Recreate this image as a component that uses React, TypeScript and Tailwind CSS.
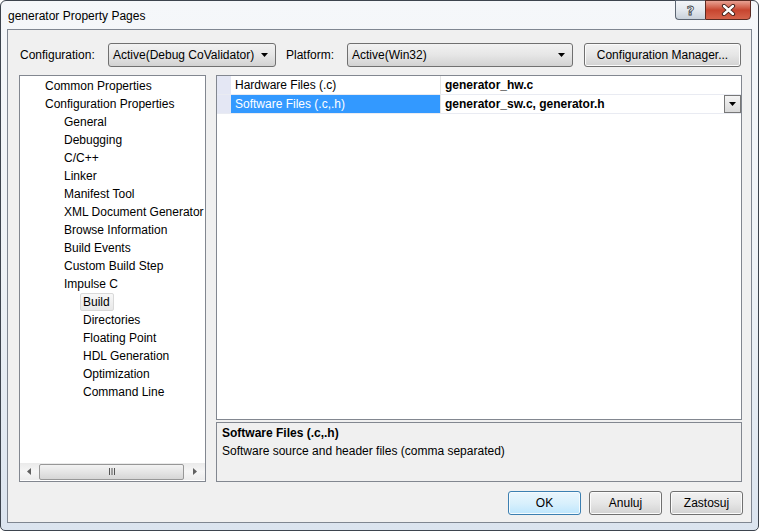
import React from "react";

const tree: [string, number, boolean?][] = [
  ["Common Properties", 1],
  ["Configuration Properties", 1],
  ["General", 2],
  ["Debugging", 2],
  ["C/C++", 2],
  ["Linker", 2],
  ["Manifest Tool", 2],
  ["XML Document Generator", 2],
  ["Browse Information", 2],
  ["Build Events", 2],
  ["Custom Build Step", 2],
  ["Impulse C", 2],
  ["Build", 3, true],
  ["Directories", 3],
  ["Floating Point", 3],
  ["HDL Generation", 3],
  ["Optimization", 3],
  ["Command Line", 3],
];

function DownArrow({ className = "" }: { className?: string }) {
  return (
    <svg width="7" height="4" viewBox="0 0 7 4" className={className}>
      <path d="M0 0 H7 L3.5 4 Z" fill="#000" />
    </svg>
  );
}

function Combo({ text, w }: { text: string; w: string }) {
  return (
    <div
      className={`${w} h-[24px] flex items-center justify-between rounded-[3px] border border-[#707070] bg-gradient-to-b from-[#f2f2f2] via-[#e6e6e6] to-[#d2d2d2] pl-[4px] pr-[7px]`}
    >
      <span className="whitespace-nowrap">{text}</span>
      <DownArrow />
    </div>
  );
}

function Btn({ text, w, def }: { text: string; w: string; def?: boolean }) {
  return (
    <div
      className={`${w} h-[24px] flex items-center justify-center rounded-[3px] border ${
        def
          ? "border-[#3c7fb1] bg-gradient-to-b from-[#eaf6fd] via-[#d9f0fc] to-[#bee6fd] shadow-[inset_0_0_0_1px_#f4fbfe]"
          : "border-[#707070] bg-gradient-to-b from-[#f2f2f2] via-[#e6e6e6] to-[#d2d2d2] shadow-[inset_0_0_0_1px_#fbfbfb]"
      }`}
    >
      {text}
    </div>
  );
}

export default function App() {
  return (
    <div className="w-[759px] h-[531px] bg-white font-['Liberation_Sans',Arial,sans-serif] text-[12px] text-black leading-[15px]">
      <div className="w-[759px] h-[531px] flex flex-col rounded-t-[6px] rounded-b-[5px] border border-[#3d444e] bg-gradient-to-b from-[#f5f7fa] via-[#eef2f6] to-[#dbe4ef]">
        {/* title bar */}
        <div className="h-[28px] shrink-0 flex items-start justify-between">
          <div className="pl-[7px] pt-[8px]">generator Property Pages</div>
          <div className="flex -mt-px mr-[7px]">
            <div className="w-[30px] h-[20px] flex items-center justify-center rounded-bl-[4px] border border-r-0 border-[#5b6572] bg-gradient-to-b from-[#f3f5f8] via-[#e3e8ee] to-[#c9d1db]">
              <span className="font-['DejaVu_Sans',sans-serif] text-[13px] font-bold text-[#f6f6f6] [-webkit-text-stroke:0.8px_#3a3f47] leading-none">?</span>
            </div>
            <div className="w-[46px] h-[20px] flex items-center justify-center rounded-br-[4px] border border-[#5a2a22] bg-gradient-to-b from-[#e8a193] via-[#c7452f] to-[#d5634b]">
              <svg width="15" height="12" viewBox="0 0 15 12">
                <path d="M3 2 L12 10 M12 2 L3 10" stroke="#3b1a14" strokeWidth="4.2" strokeLinecap="round" />
                <path d="M3 2 L12 10 M12 2 L3 10" stroke="#ffffff" strokeWidth="2.4" strokeLinecap="round" />
              </svg>
            </div>
          </div>
        </div>

        {/* client area */}
        <div className="flex-1 mx-[6px] mb-[7px] border border-[#7f8691] bg-[#f0f0f0] flex flex-col pl-[11px] pr-[8px] pt-[13px]">
          {/* config row */}
          <div className="h-[24px] flex items-center">
            <div className="w-[89px] pl-[1px]">Configuration:</div>
            <Combo text="Active(Debug CoValidator)" w="w-[168px]" />
            <div className="w-[61px] ml-[10px]">Platform:</div>
            <Combo text="Active(Win32)" w="w-[226px]" />
            <div className="ml-[11px]">
              <Btn text="Configuration Manager..." w="w-[157px]" />
            </div>
          </div>

          {/* main */}
          <div className="mt-[8px] h-[407px] flex">
            {/* tree */}
            <div className="w-[187px] border border-[#828790] bg-white flex flex-col">
              <div className="flex-1 pt-[1px] overflow-hidden">
                {tree.map(([t, lvl, sel]) => (
                  <div key={t} className="h-[18px] flex items-center whitespace-nowrap">
                    <span
                      className={`${lvl === 1 ? "ml-[22px]" : lvl === 2 ? "ml-[41px]" : "ml-[60px]"} h-[18px] flex items-center pl-[2px] pr-[3px] rounded-[2px] border ${
                        sel
                          ? "border-[#d9d9d9] bg-gradient-to-b from-[#f8f8f8] to-[#e8e8e8]"
                          : "border-transparent"
                      }`}
                    >
                      {t}
                    </span>
                  </div>
                ))}
              </div>
              {/* horizontal scrollbar */}
              <div className="h-[17px] mb-[1px] flex items-center bg-gradient-to-b from-[#eaeaea] via-[#f6f6f6] to-[#ececec]">
                <div className="w-[18px] flex items-center justify-center">
                  <svg width="4" height="7" viewBox="0 0 4 7">
                    <path d="M4 0 V7 L0 3.5 Z" fill="#606060" />
                  </svg>
                </div>
                <div className="w-[145px] h-[16px] ml-[1px] flex items-center justify-center rounded-[2px] border border-[#979797] bg-gradient-to-b from-[#f3f3f3] via-[#e5e5e5] to-[#d6d6d6]">
                  <svg width="8" height="7" viewBox="0 0 8 7">
                    <path d="M1.5 0 V7 M4 0 V7 M6.5 0 V7" stroke="#555" strokeWidth="1" />
                  </svg>
                </div>
                <div className="flex-1 flex items-center justify-center">
                  <svg width="4" height="7" viewBox="0 0 4 7">
                    <path d="M0 0 V7 L4 3.5 Z" fill="#606060" />
                  </svg>
                </div>
              </div>
            </div>

            {/* right panel */}
            <div className="ml-[10px] w-[526px] flex flex-col">
              <div className="flex-1 border border-[#828790] bg-white">
                <div className="flex h-[19px] border-b border-[#e9ebf2]">
                  <div className="w-[14px] bg-[#e4e7f4]" />
                  <div className="w-[210px] pl-[4px] flex items-center border-r border-[#e4e4e4]">Hardware Files (.c)</div>
                  <div className="flex-1 pl-[4px] flex items-center font-bold">generator_hw.c</div>
                </div>
                <div className="flex h-[19px] border-b border-[#e9ebf2]">
                  <div className="w-[14px] bg-[#e4e7f4]" />
                  <div className="w-[210px] pl-[4px] flex items-center bg-[#3399ff] text-white border-r border-[#e4e4e4]">Software Files (.c,.h)</div>
                  <div className="flex-1 pl-[4px] flex items-center justify-between font-bold">
                    <span>generator_sw.c, generator.h</span>
                    <div className="w-[17px] h-[18px] flex items-center justify-center border border-[#777] bg-gradient-to-b from-[#f4f4f4] to-[#d9d9d9]">
                      <DownArrow />
                    </div>
                  </div>
                </div>
              </div>
              <div className="mt-[2px] h-[60px] border border-[#828790] bg-[#f0f0f0] pl-[5px] pt-[1px] leading-[18px]">
                <div className="font-bold">Software Files (.c,.h)</div>
                <div>Software source and header files (comma separated)</div>
              </div>
            </div>
          </div>

          {/* buttons */}
          <div className="mt-[9px] flex justify-end gap-[8px] pr-[0px]">
            <Btn text="OK" w="w-[73px]" def />
            <Btn text="Anuluj" w="w-[73px]" />
            <Btn text="Zastosuj" w="w-[73px]" />
          </div>
        </div>
      </div>
    </div>
  );
}
